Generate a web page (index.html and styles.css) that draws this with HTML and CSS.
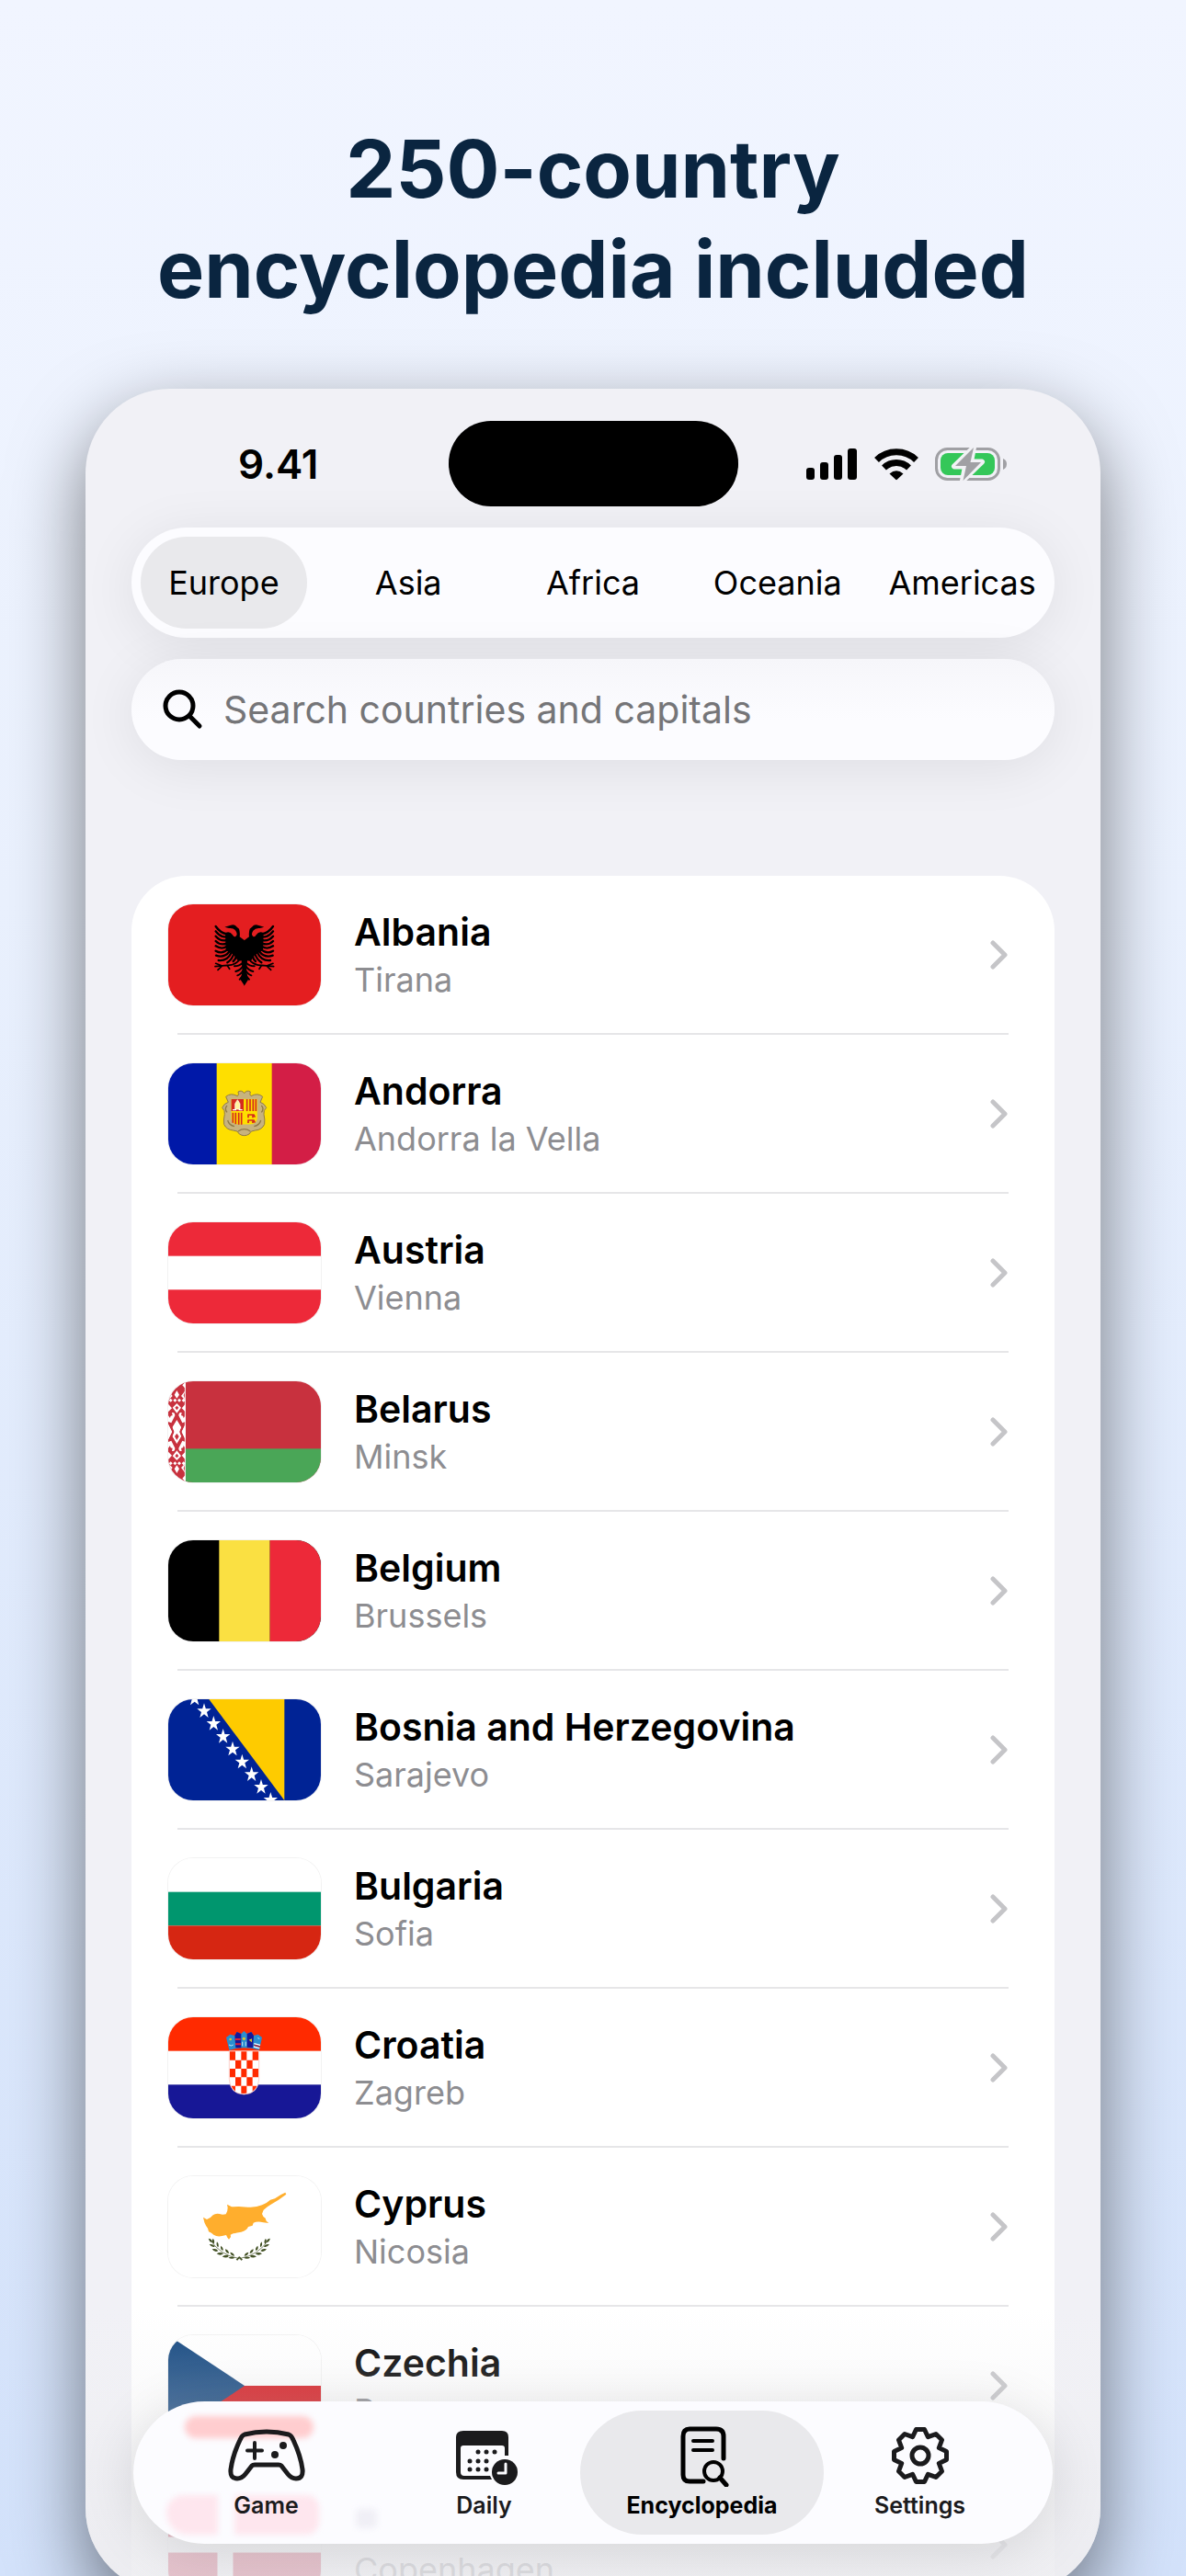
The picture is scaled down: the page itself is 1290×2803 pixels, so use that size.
FILE: index.html
```html
<!DOCTYPE html>
<html lang="en">
<head>
    <meta charset="UTF-8">
    <meta name="viewport" content="width=device-width, initial-scale=1">
    <title>250-country encyclopedia included</title>
    <link rel="stylesheet" href="styles.css">
</head>
<body>
    <main class="stage">
        <h1 class="headline">250-country<br>encyclopedia included</h1>

        <div class="phone">
            <div class="status">
                <span class="time">9.41</span>
                <span class="island"></span>
                <span class="indicators">
                    <svg width="56" height="36" viewBox="0 0 56 36">
                        <rect x="0" y="22" width="9" height="13" rx="3" />
                        <rect x="15" y="16" width="9" height="19" rx="3" />
                        <rect x="30" y="8" width="9" height="27" rx="3" />
                        <rect x="45" y="1" width="10" height="34" rx="3" />
                    </svg>
                    <svg width="48" height="36" viewBox="0 0 48 36">
                        <g fill="none" stroke="#000" stroke-width="7">
                            <path d="M2.500 13.500A31 31 0 0 1 45.500 13.500" />
                            <path d="M10.500 22A19.500 19.500 0 0 1 37.500 22" />
                        </g>
                        <path d="M16.500 28.500Q24 22 31.500 28.500L24.800 34.800Q24 35.500 23.200 34.800Z" />
                    </svg>
                    <svg width="78" height="36" viewBox="0 0 78 36">
                        <rect x="1.500" y="1.500" width="68" height="33" rx="12" fill="none" stroke="#a0a0a4" stroke-width="3" />
                        <rect x="6" y="6" width="59" height="24" rx="8" fill="#34c759" />
                        <path d="M74 12q4 1.500 4 6t-4 6z" fill="#a0a0a4" />
                        <path d="M42 0L21 20.500h12L30 36L51 15.500H39z" fill="#a0a0a4" stroke="#f1f1f5" stroke-width="6" stroke-linejoin="round" />
                        <path d="M42 0L22 20h12L30.500 36L50 16H38.500z" fill="#a0a0a4" />
                    </svg>
                </span>
            </div>

            <nav class="regions" aria-label="Regions">
                <button type="button" class="active">Europe</button>
                <button type="button">Asia</button>
                <button type="button">Africa</button>
                <button type="button">Oceania</button>
                <button type="button">Americas</button>
            </nav>

            <label class="search">
                <svg width="44" height="44" viewBox="0 0 44 44" fill="none" stroke="#000" stroke-width="5" stroke-linecap="round">
                    <circle cx="18" cy="18" r="15" />
                    <path d="M29 29L40 40" />
                </svg>
                <input type="search" placeholder="Search countries and capitals" aria-label="Search countries and capitals">
            </label>

            <ul class="list">
                <li>
                    <a href="#albania">
                        <svg class="flag" viewBox="70 132 498 330" preserveAspectRatio="none">
                            <rect x="70" y="132" width="498" height="330" fill="#e41e20" />
                            <g id="eagle">
                                <path d="M319 250L303 238Q305 224 301 212L294 206Q286 196 274 200L254 206L268 210Q282 208 290 218Q298 230 290 237Q284 240 280 232Q270 218 256 226L258 282L284 296L298 318L309 316L312 350L306 378L319 398Z" />
                                <g fill="none" stroke="#000" stroke-width="7" stroke-linecap="round">
                                    <path d="M262 229Q240 226 225 204M262 239Q240 240 225 220M262 249Q240 254 225 236M262 259Q240 268 225 252M262 269Q244 281 225 268M264 279Q246 296 225 284M270 286Q252 309 226 299M276 290Q262 318 234 315M284 294Q278 312 263 322M292 298Q290 312 282 318" />
                                    <path d="M314 322Q302 334 286 334M314 334Q304 348 290 351M315 346Q308 360 296 364M316 356Q312 370 303 377" stroke-width="6" />
                                    <path d="M298 318Q282 332 262 331L223 335M246 333L225 325M246 333L232 346M262 331L270 343" stroke-width="5" />
                                </g>
                            </g>
                            <use href="#eagle" transform="matrix(-1 0 0 1 637 0)" />
                        </svg>
                        <span class="names"><strong>Albania</strong><small>Tirana</small></span>
                        <svg class="chevron" viewBox="0 0 20 32"><path d="M3 3L16 16L3 29" /></svg>
                    </a>
                </li>
                <li>
                    <a href="#andorra">
                        <svg class="flag" viewBox="70 652 498 330" preserveAspectRatio="none">
                            <rect x="70" y="652" width="159" height="330" fill="#0018a8" />
                            <rect x="228" y="652" width="181" height="330" fill="#fedf00" />
                            <rect x="408" y="652" width="160" height="330" fill="#d0103a" opacity=".94" />
                            <path d="M318 750q-8-12-20-5q4 10-2 14q-22-12-38 2l8 18q-14 4-20 18q10 8 8 22q-4 16-2 32q8 18 30 20q16 0 20 12q16 10 32 0q4-12 20-12q22-2 30-20q2-16-2-32q-2-14 8-22q-6-14-20-18l8-18q-16-14-38-2q-6-4-2-14q-12-7-20 5z" fill="#c7b37f" stroke="#8f7a48" stroke-width="3" />
                            <path d="M262 790q-10 10 0 22M374 790q10 10 0 22M264 838q4 16 22 20M372 838q-4 16-22 20M298 874q20-14 40 0" fill="none" stroke="#8f7a48" stroke-width="4" />
                            <path d="M274 767h88v66q-4 20-26 20h-36q-22 0-26-20z" fill="#fedf00" stroke="#c7b37f" stroke-width="3" />
                            <rect x="276" y="769" width="40" height="39" fill="#d52b1e" />
                            <path d="M288 802V784l8-13l8 13V802z" fill="#fff4a0" stroke="#fff" stroke-width="2" />
                            <path d="M280 804h12M300 804h12" stroke="#fff" stroke-width="4" />
                            <path d="M327 769V808M337 769V808M347 769V808M356 769V808M281 813V846M290 813V851M300 813V852M309 813V852" stroke="#d52b1e" stroke-width="5" />
                            <path d="M329 820h20l4 8M331 820v10M346 820v10M329 838h20l4 8M331 838v9M346 838v9" fill="none" stroke="#d52b1e" stroke-width="5" />
                        </svg>
                        <span class="names"><strong>Andorra</strong><small>Andorra la Vella</small></span>
                        <svg class="chevron" viewBox="0 0 20 32"><path d="M3 3L16 16L3 29" /></svg>
                    </a>
                </li>
                <li>
                    <a href="#austria">
                        <svg class="flag" viewBox="0 0 3 3" preserveAspectRatio="none">
                            <rect width="3" height="3" fill="#ed2939" />
                            <rect y="1" width="3" height="1" fill="#fff" />
                        </svg>
                        <span class="names"><strong>Austria</strong><small>Vienna</small></span>
                        <svg class="chevron" viewBox="0 0 20 32"><path d="M3 3L16 16L3 29" /></svg>
                    </a>
                </li>
                <li>
                    <a href="#belarus">
                        <svg class="flag" viewBox="70 610 498 330" preserveAspectRatio="none">
                            <rect x="70" y="610" width="498" height="330" fill="#c8313e" />
                            <rect x="126" y="830" width="442" height="110" fill="#4aa657" />
                            <g id="ornament">
                                <g fill="#fff">
                                    <path d="M98 738l14 22l-6 14l6 16l-14 24l-14-24l6-16l-6-14z" />
                                    <path d="M126 750v50l-12-24zM70 750v50l12-24z" />
                                    <path d="M104 722q0-12 10-10l-2 10q8-2 8 8l6-8v20l-10 4zM92 722q0-12-10-10l2 10q-8-2-8 8l-6-8v20l10 4z" />
                                    <path d="M98 640l8 14l-8 12l-8-12zM98 682l14 14l-14 18l-14-18zM98 610l10 6l-10 16l-10-16zM126 612v22l-10-11zM70 612v22l10-11zM126 640l-14 18l14 14l-6-16zM70 640l14 18l-14 14l6-16zM126 684l-12 14l12 12zM70 684l12 14l-12 12z" />
                                    <path d="M72 672l6-6l6 6l-6 6zM86 672l6-6l6 6l-6 6zM100 672l6-6l6 6l-6 6zM114 672l6-6l6 6l-6 6z" />
                                </g>
                                <path d="M98 748l7 12l-7 10l-7-10zM98 690l6 6l-6 8l-6-8z" fill="#c8313e" />
                            </g>
                            <use href="#ornament" transform="matrix(1 0 0 -1 0 1550)" />
                            <path d="M98 768l5 7l-5 7l-5-7z" fill="#fff" />
                            <path d="M125 610v330" stroke="#fff" stroke-width="3" />
                        </svg>
                        <span class="names"><strong>Belarus</strong><small>Minsk</small></span>
                        <svg class="chevron" viewBox="0 0 20 32"><path d="M3 3L16 16L3 29" /></svg>
                    </a>
                </li>
                <li>
                    <a href="#belgium">
                        <svg class="flag" viewBox="0 0 3 3" preserveAspectRatio="none">
                            <rect width="3" height="3" fill="#000" />
                            <rect x="1" width="1" height="3" fill="#fae042" />
                            <rect x="2" width="1" height="3" fill="#ed2939" />
                        </svg>
                        <span class="names"><strong>Belgium</strong><small>Brussels</small></span>
                        <svg class="chevron" viewBox="0 0 20 32"><path d="M3 3L16 16L3 29" /></svg>
                    </a>
                </li>
                <li>
                    <a href="#bosnia">
                        <svg class="flag" viewBox="70 568 498 330" preserveAspectRatio="none">
                            <rect x="70" y="568" width="498" height="330" fill="#002395" />
                            <path d="M203 568H449V898z" fill="#fecb00" />
                            <g fill="#fff">
                                <path id="star" d="M187 581L192.500 599L210 599L196 610L201 628L187 617L173 628L178 610L164 599L181.500 599Z" />
                                <use href="#star" x="-31" y="-41" />
                                <use href="#star" x="31" y="41" />
                                <use href="#star" x="62" y="83" />
                                <use href="#star" x="93" y="124" />
                                <use href="#star" x="124" y="166" />
                                <use href="#star" x="155" y="207" />
                                <use href="#star" x="186" y="248" />
                                <use href="#star" x="217" y="290" />
                            </g>
                        </svg>
                        <span class="names"><strong>Bosnia and Herzegovina</strong><small>Sarajevo</small></span>
                        <svg class="chevron" viewBox="0 0 20 32"><path d="M3 3L16 16L3 29" /></svg>
                    </a>
                </li>
                <li>
                    <a href="#bulgaria">
                        <svg class="flag" viewBox="0 0 3 3" preserveAspectRatio="none">
                            <rect width="3" height="3" fill="#fff" />
                            <rect y="1" width="3" height="1" fill="#00966e" />
                            <rect y="2" width="3" height="1" fill="#d62612" />
                        </svg>
                        <span class="names"><strong>Bulgaria</strong><small>Sofia</small></span>
                        <svg class="chevron" viewBox="0 0 20 32"><path d="M3 3L16 16L3 29" /></svg>
                    </a>
                </li>
                <li>
                    <a href="#croatia">
                        <svg class="flag" viewBox="70 586 498 330" preserveAspectRatio="none">
                            <rect x="70" y="586" width="498" height="330" fill="#fff" />
                            <rect x="70" y="586" width="498" height="110" fill="#ff2a00" />
                            <rect x="70" y="806" width="498" height="110" fill="#171796" />
                            <clipPath id="shield"><path d="M271 697H364V788Q362 834 317 835Q273 834 271 788z" /></clipPath>
                            <path d="M269 696H366V788Q364 836 317 838Q271 836 269 788z" fill="#fff" stroke="#f9b9b0" stroke-width="2" />
                            <g clip-path="url(#shield)" fill="#ff2a00">
                                <path id="checks" d="M271 698h18v28h-18zM308 698h18v28h-18zM345 698h19v28h-19zM289 726h19v28h-19zM326 726h19v28h-19z" />
                                <use href="#checks" y="56" />
                                <use href="#checks" y="112" />
                            </g>
                            <path d="M259 652l13-10l15 4l7-12l14 6l9-9l10 9l14-6l8 12l14-4l13 10l-9 41q-50-14-98 0z" fill="#2a8fd0" />
                            <path d="M287 645l7-11l14 6v46h-18zM327 640l14-6l8 12l-3 40l-19-2z" fill="#171796" />
                            <path d="M288 658h18M289 674h18" stroke="#d8203a" stroke-width="6" />
                            <path d="M350 672l20 5M349 682l19 5" stroke="#fff" stroke-width="4" />
                            <path d="M350 677l19 5" stroke="#b01c30" stroke-width="4" />
                            <path d="M333 660l10-4v12z" fill="#d9c531" />
                            <circle cx="317" cy="656" r="5" fill="#d9c531" />
                            <circle cx="273" cy="658" r="4" fill="#d9c531" />
                            <path d="M268 676q8 6 14 0M312 666v14M323 666v14M362 654l6 2" fill="none" stroke="#c7e6f5" stroke-width="3" />
                        </svg>
                        <span class="names"><strong>Croatia</strong><small>Zagreb</small></span>
                        <svg class="chevron" viewBox="0 0 20 32"><path d="M3 3L16 16L3 29" /></svg>
                    </a>
                </li>
                <li>
                    <a href="#cyprus">
                        <svg class="flag" viewBox="70 85 498 330" preserveAspectRatio="none">
                            <rect x="70" y="85" width="498" height="330" fill="#fff" />
                            <path d="M184 219L188 236L193 246L199 255L202 266Q212 270 218 276Q230 284 246 280L259 277L263 285L268 291L274 283L273 276Q286 270 308 267Q326 263 331 250L345 246L348 237Q362 231 380 236L398 238L390 231L387 222Q379 218 376 208L381 195Q392 184 410 174L430 162L455 144L452 138Q436 144 418 158L403 162Q390 174 376 179Q356 188 330 186L300 184L277 185L262 177L264 188Q264 200 258 209Q246 212 238 208Q224 205 216 212Q208 222 196 226z" fill="#ffae2d" />
                            <g id="branch" fill="#435125">
                                <path d="M206 290Q236 342 302 354" fill="none" stroke="#435125" stroke-width="2" />
                                <path d="M201 288q14 2 12 14q-10-4-12-14zM216 288q8 10 2 18q-8-8-2-18zM204 307q14-2 18 8q-10 4-18-8zM229 299q8 8 4 18q-8-6-4-18zM213 323q14-4 20 6q-12 6-20-6zM242 312q10 8 6 16q-10-4-6-16zM228 338q12-8 22 0q-10 8-22 0zM256 323q12 4 12 14q-12-2-12-14zM246 347q12-8 22-2q-8 10-22 2zM272 333q12 2 14 12q-12 0-14-12zM266 351q10-6 22 0q-10 6-22 0zM291 357l10-10l3 3l-8 10z" />
                            </g>
                            <use href="#branch" transform="matrix(-1 0 0 1 604 0)" />
                        </svg>
                        <span class="names"><strong>Cyprus</strong><small>Nicosia</small></span>
                        <svg class="chevron" viewBox="0 0 20 32"><path d="M3 3L16 16L3 29" /></svg>
                    </a>
                </li>
                <li>
                    <a href="#czechia">
                        <svg class="flag" viewBox="0 0 6 4" preserveAspectRatio="none">
                            <rect width="6" height="4" fill="#fff" />
                            <rect y="2" width="6" height="2" fill="#d7141a" />
                            <path d="M0 0L3 2L0 4z" fill="#11457e" />
                        </svg>
                        <span class="names"><strong>Czechia</strong><small>Prague</small></span>
                        <svg class="chevron" viewBox="0 0 20 32"><path d="M3 3L16 16L3 29" /></svg>
                    </a>
                </li>
                <li>
                    <a href="#denmark">
                        <svg class="flag" viewBox="0 0 166 110" preserveAspectRatio="none">
                            <rect width="166" height="110" fill="#c60c30" />
                            <path d="M62 0V110M0 55H166" stroke="#fff" stroke-width="17" />
                        </svg>
                        <span class="names"><strong>Denmark</strong><small>Copenhagen</small></span>
                        <svg class="chevron" viewBox="0 0 20 32"><path d="M3 3L16 16L3 29" /></svg>
                    </a>
                </li>
            </ul>

            <div class="fade"></div>

            <nav class="tabbar" aria-label="Main">
                <span class="glow glow-red"></span>
                <span class="glow glow-pink"></span>
                <span class="glow glow-pink-wide"></span>
                <span class="glow glow-grey"></span>
                <a href="#game">
                    <svg width="84" height="68" viewBox="0 0 84 68" fill="none" stroke="#1b1b1d" stroke-width="5" stroke-linejoin="round" stroke-linecap="round">
                        <path d="M18 11Q42 5 66 11Q69 12 71 17Q79 34 81 49Q82 59 74 59Q69 59 65 54L58 45Q57 44 55 44H29Q27 44 26 45L19 54Q15 59 10 59Q2 59 3 49Q5 34 13 17Q15 12 18 11Z" />
                        <path d="M29 20V37M21 28.500H37" stroke-width="4" />
                        <circle cx="60" cy="23" r="4" fill="#1b1b1d" stroke="none" />
                        <circle cx="51" cy="33" r="4" fill="#1b1b1d" stroke="none" />
                    </svg>
                    <span>Game</span>
                </a>
                <a href="#daily">
                    <svg width="72" height="68" viewBox="-3 0 72 68">
                        <path d="M10 7H52Q59 7 59 14V34H55V26Q55 23 52 23H10Q7 23 7 26V52Q7 56 11 56H39L41 60H10Q2 60 2 52V14Q2 7 10 7Z" fill="#1b1b1d" />
                        <g fill="#1b1b1d">
                            <circle cx="26" cy="30" r="2.500" /><circle cx="35" cy="30" r="2.500" /><circle cx="44" cy="30" r="2.500" />
                            <circle cx="17" cy="40" r="2.500" /><circle cx="26" cy="40" r="2.500" /><circle cx="35" cy="40" r="2.500" />
                            <circle cx="17" cy="49" r="2.500" /><circle cx="26" cy="49" r="2.500" /><circle cx="35" cy="49" r="2.500" />
                            <circle cx="55" cy="52" r="14" />
                        </g>
                        <path d="M56 43V53H48" fill="none" stroke="#fcfcff" stroke-width="3" stroke-linecap="round" stroke-linejoin="round" />
                    </svg>
                    <span>Daily</span>
                </a>
                <a href="#encyclopedia" class="active">
                    <svg width="60" height="68" viewBox="-6 0 60 68" fill="none" stroke="#000" stroke-width="5" stroke-linecap="round">
                        <path d="M47 37V13Q47 5 39 5H10Q3 5 3 13V55Q3 62 10 62H25" />
                        <path d="M14 18H35M14 28H35" stroke-width="4" />
                        <circle cx="36" cy="51" r="10" stroke-width="4" />
                        <path d="M43 58L50 66" />
                    </svg>
                    <span>Encyclopedia</span>
                </a>
                <a href="#settings">
                    <svg width="64" height="68" viewBox="-32 -34 64 68" fill="none" stroke="#1b1b1d" stroke-width="5" stroke-linejoin="round">
                        <path d="M-4.500 -28.500H4.500L8.400 -20.300L17 -23.500L23.500 -17L20.300 -8.400L28.500 -4.500V4.500L20.300 8.400L23.500 17L17 23.500L8.400 20.300L4.500 28.500H-4.500L-8.400 20.300L-17 23.500L-23.500 17L-20.300 8.400L-28.500 4.500V-4.500L-20.300 -8.400L-23.500 -17L-17 -23.500L-8.400 -20.300Z" />
                        <circle r="9" />
                    </svg>
                    <span>Settings</span>
                </a>
            </nav>
        </div>
    </main>
</body>
</html>
```
FILE: styles.css
```css
* {
    margin: 0;
    padding: 0;
    box-sizing: border-box;
}
body {
    font-family: Inter, "Liberation Sans", sans-serif;
    color: #000;
    overflow: hidden;
}
.stage {
    display: flex;
    flex-direction: column;
    height: 100vh;
    padding: 130px 93px 0;
    overflow: hidden;
    background: linear-gradient(#f1f5ff, #eaf1fe 35%, #d3e2fb);
}
.headline {
    text-align: center;
    font-size: 86px;
    line-height: 109px;
    font-weight: 700;
    color: #0a2540;
    margin-bottom: 75px;
    white-space: nowrap;
}

/* phone */
.phone {
    position: relative;
    flex: 1;
    min-height: 0;
    margin-bottom: -18px;
    display: flex;
    flex-direction: column;
    border-radius: 92px;
    background: #f1f1f6;
    overflow: hidden;
    box-shadow: 0 30px 80px rgba(0, 0, 0, 0.5);
}
.status {
    flex: none;
    display: grid;
    grid-template-columns: 1fr 315px 1fr;
    align-items: center;
    padding-top: 35px;
    margin-bottom: 23px;
}
.status .time {
    padding-left: 166px;
    font-size: 44px;
    font-weight: 600;
}
.island {
    height: 93px;
    border-radius: 46px;
    background: #000;
}
.indicators {
    display: flex;
    justify-content: flex-end;
    gap: 18px;
    padding-right: 102px;
}

/* region switch and search */
.regions {
    flex: none;
    display: grid;
    grid-template-columns: repeat(5, 1fr);
    height: 120px;
    margin: 0 50px 23px;
    border-radius: 60px;
    background: #fcfcff;
    box-shadow: 0 8px 60px rgba(0, 0, 0, 0.08);
}
.regions button {
    margin: 10px;
    border: 0;
    border-radius: 50px;
    background: none;
    font: 400 36px Inter, "Liberation Sans", sans-serif;
    color: #000;
    cursor: pointer;
    display: flex;
    align-items: center;
    justify-content: center;
}
.regions .active {
    background: #e9e9ec;
}
.search {
    flex: none;
    display: flex;
    align-items: center;
    gap: 22px;
    height: 110px;
    margin: 0 50px 126px;
    padding: 0 34px;
    border-radius: 55px;
    background: linear-gradient(#f6f6fa, #fcfcff 60%);
    box-shadow: 0 8px 60px rgba(0, 0, 0, 0.08);
}
.search input {
    flex: 1;
    border: 0;
    outline: 0;
    background: none;
    font: 400 41px Inter, "Liberation Sans", sans-serif;
}
.search input::placeholder {
    color: #757578;
}

/* countries */
.list {
    flex: none;
    margin: 0 50px;
    padding: 0 50px;
    border-radius: 60px 60px 0 0;
    background: #fff;
    list-style: none;
}
.list li {
    border-bottom: 2px solid #e6e6e8;
}
.list a {
    display: flex;
    align-items: center;
    padding: 31px 0 30px;
    margin-left: -10px;
    color: #000;
    text-decoration: none;
}
.flag {
    width: 166px;
    height: 110px;
    border-radius: 27px;
    box-shadow: 0 0 0 1px rgba(0, 0, 0, 0.05);
    margin-right: 36px;
}
.names {
    flex: 1;
    display: flex;
    flex-direction: column;
}
.names strong {
    font-size: 41px;
    line-height: 54px;
    font-weight: 600;
}
.names small {
    font-size: 36px;
    line-height: 50px;
    color: #8d8d91;
}
.chevron {
    width: 20px;
    height: 32px;
    fill: none;
    stroke: #c5c5c8;
    stroke-width: 5;
    stroke-linecap: round;
    stroke-linejoin: round;
}

/* bottom bar */
.fade {
    position: absolute;
    left: 0;
    right: 0;
    bottom: 0;
    height: 310px;
    background: linear-gradient(rgba(241, 241, 246, 0), rgba(238, 238, 240, 0.25) 32%, rgba(236, 236, 240, 0.82) 85%);
}
.tabbar {
    position: absolute;
    left: 52px;
    right: 52px;
    bottom: 53px;
    display: grid;
    grid-template-columns: repeat(4, 1fr);
    padding: 0 26px;
    border-radius: 78px;
    background: #fcfcff;
    box-shadow: 0 8px 60px rgba(0, 0, 0, 0.12);
}
.tabbar a {
    position: relative;
    display: flex;
    flex-direction: column;
    align-items: center;
    gap: 4px;
    height: 135px;
    margin: 10px -14px;
    padding-top: 15px;
    border-radius: 68px;
    color: #1b1b1d;
    font-size: 25px;
    line-height: 32px;
    font-weight: 600;
    text-decoration: none;
}
.tabbar .active {
    background: #e9e9ec;
    color: #000;
    font-weight: 700;
}
.glow {
    position: absolute;
    filter: blur(3px);
}
.glow-red {
    left: 56px;
    top: 16px;
    width: 140px;
    height: 24px;
    border-radius: 12px;
    background: #ffcdcf;
}
.glow-pink {
    left: 36px;
    top: 102px;
    width: 56px;
    height: 43px;
    border-radius: 28px 2px 2px 36px;
    background: #fee6ee;
}
.glow-pink-wide {
    left: 110px;
    top: 102px;
    width: 92px;
    height: 43px;
    border-radius: 2px 14px 14px 2px;
    background: #fee6ee;
}
.glow-grey {
    left: 242px;
    top: 117px;
    width: 23px;
    height: 21px;
    border-radius: 5px;
    background: #f0eff6;
}
```
